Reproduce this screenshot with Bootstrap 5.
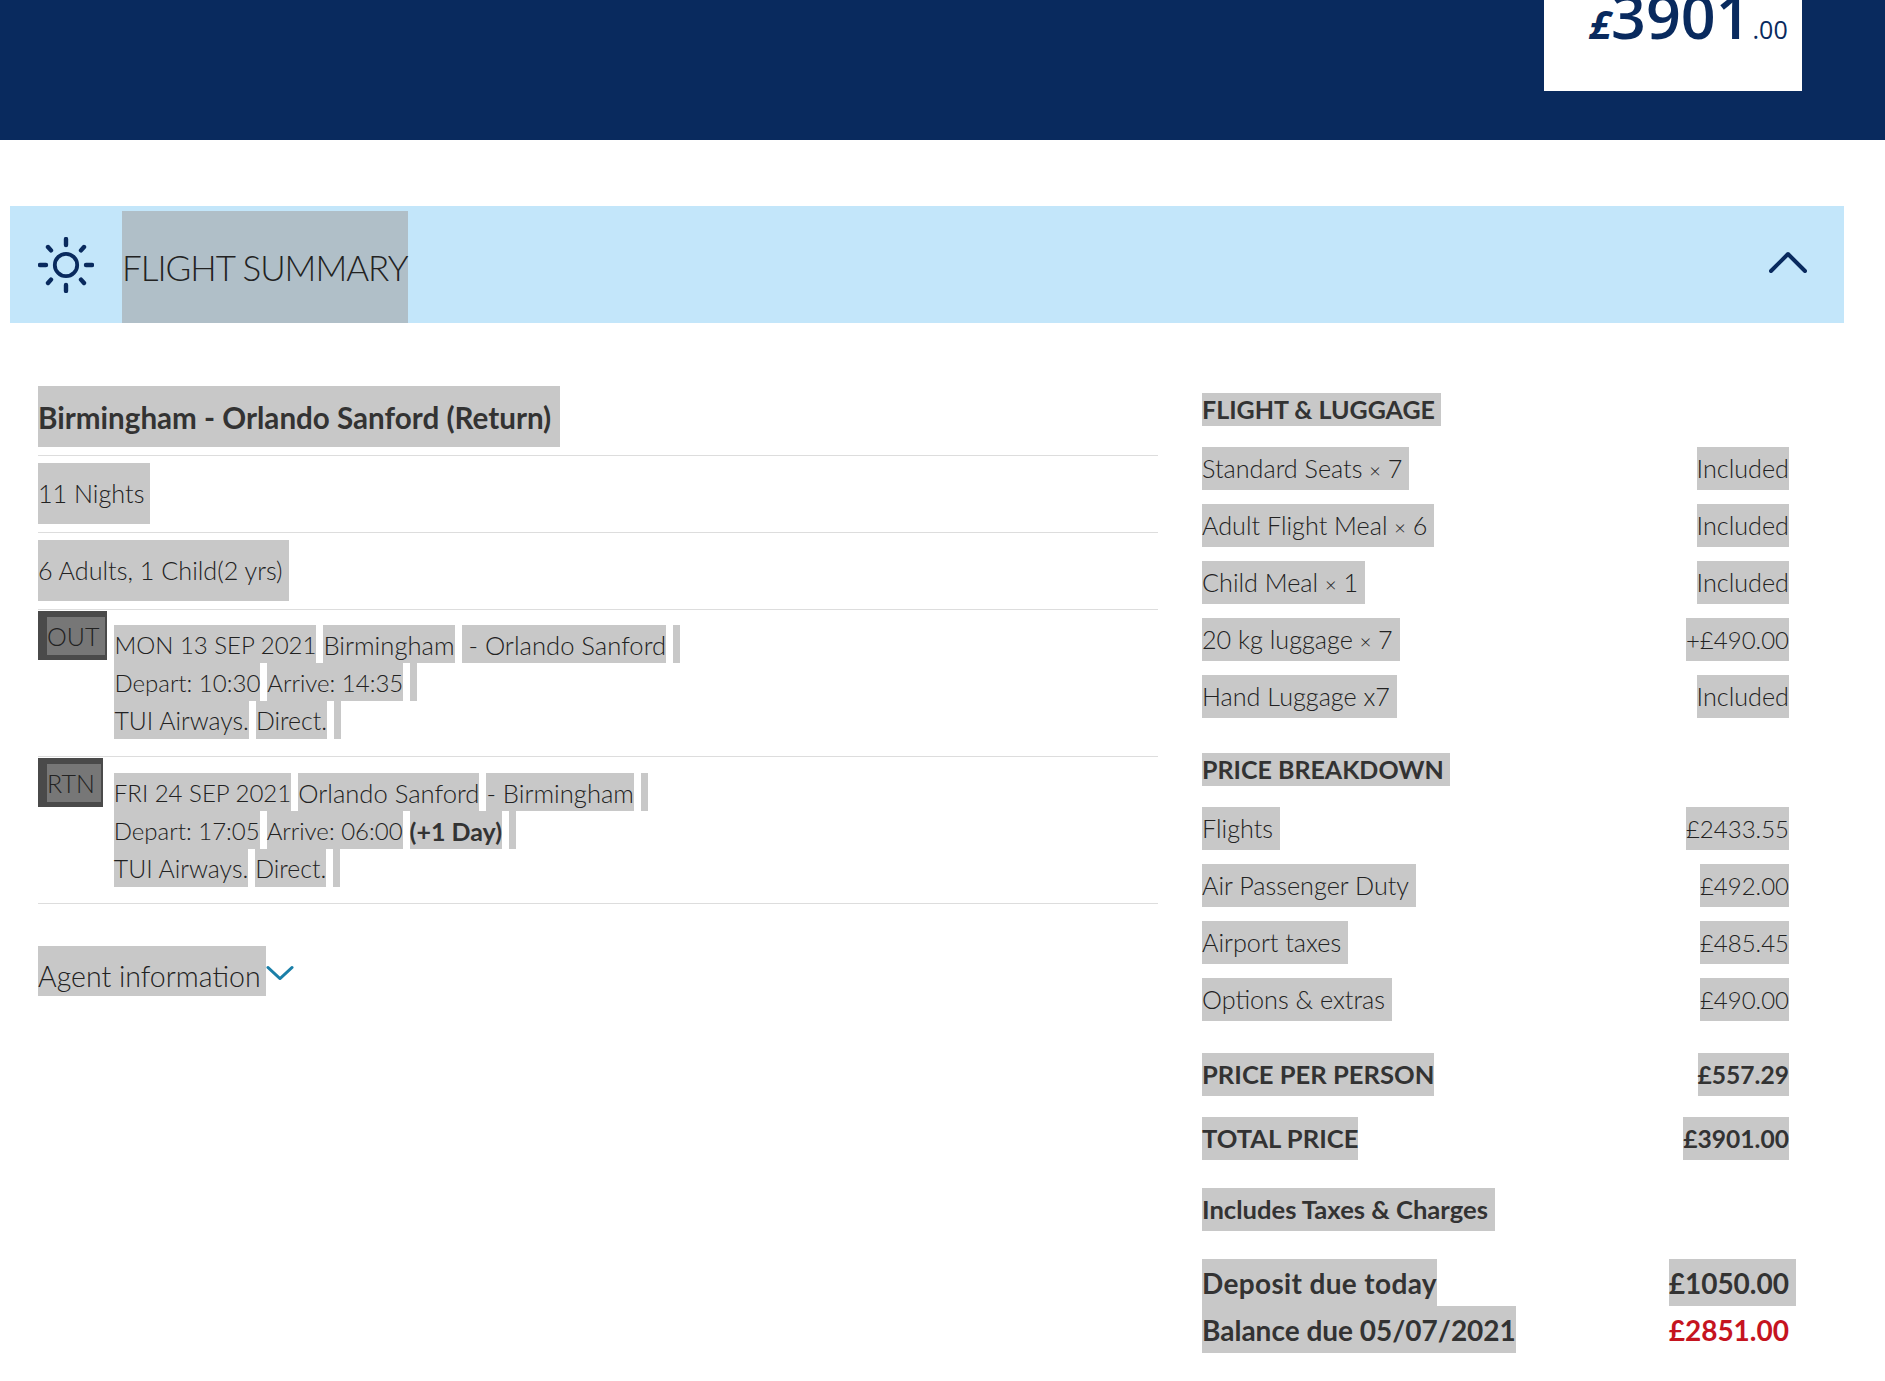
<!DOCTYPE html>
<html lang="en">
<head>
<meta charset="UTF-8">
<title>Flight Summary</title>
<link rel="stylesheet" href="https://cdn.jsdelivr.net/npm/bootstrap@5.3.0/dist/css/bootstrap.min.css">
<style>
body { font-family: Lato, "Open Sans", sans-serif; font-weight: 300; color: #222; background: #fff; font-size: 25.2px; }
.sel { display: inline-block; background: #c8c8c8; white-space: nowrap; }
.num { font-size: 24px; }
.mid { font-size: 24.8px; }
.times { font-size: 20px; line-height: 1; }

.top-bar { background: #092a5e; height: 140px; padding-left: 1544px; }
.price-box { background: #fff; width: 258px; height: 91px; overflow: hidden; color: #092a5e; font-family: "Open Sans", sans-serif; padding: 0 15px 45px 45px; line-height: 1; white-space: nowrap; }
.price-pound { font-size: 40px; font-weight: 700; font-style: italic; }
.price-main { font-size: 61px; font-weight: 600; }
.price-dec { font-size: 25px; font-weight: 400; margin-left: 2px; }

.summary-band { background: #c3e6fa; height: 117px; margin: 66px 41px 0 10px; padding: 0 37px 0 28px; }
.summary-title { background: #b0bfc8; font-size: 35px; letter-spacing: -1px; line-height: 112px; margin-left: 28px; padding-right: 1px; white-space: nowrap; }
.band-chevron { margin-bottom: 6px; }

.summary-body { padding: 63px 0 0 38px; gap: 44px; }
.trip-col { width: 1120px; }
.price-col { width: 594px; padding: 7px 7px 0 0; }

.trip-line { border-bottom: 1px solid #ddd; padding-bottom: 8px; margin-bottom: 7px; }
.trip-line .sel { height: 61px; line-height: 61px; padding-right: 6px; vertical-align: top; }
.trip-line .trip-title { font-size: 29.6px; font-weight: 700; color: #333; line-height: 63px; padding-right: 9px; }
.leg { border-bottom: 1px solid #ddd; padding-bottom: 17px; }
.leg-tag { background: #4a4a4a; height: 49px; padding: 6px 2px 0 9px; margin: 1px 7px 0 0; flex: none; font-size: 25px; }
.leg-tag span { display: block; background: #777; line-height: 38px; padding-right: 6px; }
.leg-lines { padding-top: 15px; }
.leg-back { padding-bottom: 16px; }
.leg-back .leg-tag { margin-right: 11px; }
.leg-back .leg-lines { padding-top: 16px; }
.leg-row { gap: 7px; height: 38px; font-size: 25.6px; }
.leg-row .sel { height: 38px; line-height: 40px; }
.blank { width: 7px; }
.strong-day { font-weight: 700; font-size: 25px; color: #333; }
.agent-row { margin-top: 42px; }
.agent-row .sel { font-size: 28.5px; height: 50px; line-height: 60px; padding-right: 5px; }
.agent-chevron { margin-top: 19px; }

.price-head { font-size: 25px; font-weight: 700; line-height: 33px; color: #333; }
.price-head .sel { padding-right: 6px; }
.price-line { margin-top: 14px; height: 43px; line-height: 43px; }
.price-line .sel { height: 43px; }
.price-line .sel:first-child { padding-right: 7px; }
.group-gap { margin-top: 35px; }
.list-gap { margin-top: 21px; }
.strong-line { font-size: 25.6px; font-weight: 700; line-height: 43px; color: #333; }
.charges-text { padding-right: 7px; }
.strong-num { font-size: 24.6px; }
.due-line { font-size: 28px; font-weight: 700; line-height: 47px; color: #333; }
.due-line > * { height: 47px; line-height: 49px; }
.due-first { letter-spacing: .35px; }
.due-amount { margin-right: -7px; padding-right: 7px; }
.due-red { color: #c5141f; }
</style>
</head>
<body>
<div class="top-bar">
  <div class="price-box d-flex align-items-end"><span><span class="price-pound">£</span><span class="price-main">3901</span><span class="price-dec">.00</span></span></div>
</div>

<div class="summary-band d-flex align-items-end">
  <svg class="align-self-center" width="56" height="56" viewBox="0 0 56 56" fill="none" stroke="#092a5e" stroke-width="4.4" stroke-linecap="round">
    <circle cx="28" cy="28" r="11.2" stroke-width="3.8"/>
    <path d="M28 2v6M28 48v6M2 28h6M48 28h6M10 10l3 3.4M46 10l-3 3.4M10 46l3-3.4M46 46l-3-3.4"/>
  </svg>
  <div class="summary-title">FLIGHT SUMMARY</div>
  <svg class="band-chevron ms-auto align-self-center" width="38" height="22" viewBox="0 0 38 22" fill="none" stroke="#092a5e" stroke-width="4" stroke-linecap="round" stroke-linejoin="round">
    <path d="M2 20L19 3l17 17"/>
  </svg>
</div>

<div class="summary-body d-flex align-items-start">
  <div class="trip-col">
    <div class="trip-line"><span class="sel trip-title">Birmingham - Orlando Sanford (Return)</span></div>
    <div class="trip-line"><span class="sel">11 Nights</span></div>
    <div class="trip-line mb-0"><span class="sel">6 Adults, 1 Child(2 yrs)</span></div>

    <div class="leg d-flex">
      <div class="leg-tag"><span>OUT</span></div>
      <div class="leg-lines">
        <div class="leg-row d-flex"><span class="sel num">MON 13 SEP 2021</span><span class="sel">Birmingham</span><span class="sel">&nbsp;- Orlando Sanford</span><span class="sel blank">&nbsp;</span></div>
        <div class="leg-row d-flex"><span class="sel num">Depart: 10:30</span><span class="sel num">Arrive: 14:35</span><span class="sel blank">&nbsp;</span></div>
        <div class="leg-row d-flex"><span class="sel mid">TUI Airways.</span><span class="sel mid">Direct.</span><span class="sel blank">&nbsp;</span></div>
      </div>
    </div>

    <div class="leg leg-back d-flex">
      <div class="leg-tag"><span>RTN</span></div>
      <div class="leg-lines">
        <div class="leg-row d-flex"><span class="sel num">FRI 24 SEP 2021</span><span class="sel">Orlando Sanford</span><span class="sel">- Birmingham</span><span class="sel blank">&nbsp;</span></div>
        <div class="leg-row d-flex"><span class="sel num">Depart: 17:05</span><span class="sel num">Arrive: 06:00</span><span class="sel strong-day">(+1 Day)</span><span class="sel blank">&nbsp;</span></div>
        <div class="leg-row d-flex"><span class="sel mid">TUI Airways.</span><span class="sel mid">Direct.</span><span class="sel blank">&nbsp;</span></div>
      </div>
    </div>

    <div class="agent-row d-flex align-items-start">
      <span class="sel">Agent information</span>
      <svg class="agent-chevron" width="28" height="16" viewBox="0 0 30 16" fill="none" stroke="#1a7fa8" stroke-width="3" stroke-linecap="round" stroke-linejoin="round">
        <path d="M2 2l13 12L28 2"/>
      </svg>
    </div>
  </div>

  <div class="price-col">
    <div class="price-head"><span class="sel">FLIGHT &amp; LUGGAGE</span></div>
    <div class="d-flex justify-content-between list-gap price-line"><span class="sel">Standard Seats <span class="times">×</span> 7</span><span class="sel">Included</span></div>
    <div class="d-flex justify-content-between price-line"><span class="sel">Adult Flight Meal <span class="times">×</span> 6</span><span class="sel">Included</span></div>
    <div class="d-flex justify-content-between price-line"><span class="sel">Child Meal <span class="times">×</span> 1</span><span class="sel">Included</span></div>
    <div class="d-flex justify-content-between price-line"><span class="sel">20 kg luggage <span class="times">×</span> 7</span><span class="sel num">+£490.00</span></div>
    <div class="d-flex justify-content-between price-line"><span class="sel">Hand Luggage x7</span><span class="sel">Included</span></div>

    <div class="price-head group-gap"><span class="sel">PRICE BREAKDOWN</span></div>
    <div class="d-flex justify-content-between list-gap price-line"><span class="sel">Flights</span><span class="sel num">£2433.55</span></div>
    <div class="d-flex justify-content-between price-line"><span class="sel">Air Passenger Duty</span><span class="sel num">£492.00</span></div>
    <div class="d-flex justify-content-between price-line"><span class="sel">Airport taxes</span><span class="sel num">£485.45</span></div>
    <div class="d-flex justify-content-between price-line"><span class="sel">Options &amp; extras</span><span class="sel num">£490.00</span></div>

    <div class="d-flex justify-content-between strong-line mt-4 pt-2"><span class="sel">PRICE PER PERSON</span><span class="sel strong-num">£557.29</span></div>
    <div class="d-flex justify-content-between strong-line list-gap"><span class="sel">TOTAL PRICE</span><span class="sel strong-num">£3901.00</span></div>
    <div class="strong-line mt-4 pt-1"><span class="sel charges-text">Includes Taxes &amp; Charges</span></div>
    <div class="d-flex justify-content-between due-line mt-4 pt-1"><span class="sel due-first">Deposit due today</span><span class="sel due-amount">£1050.00</span></div>
    <div class="d-flex justify-content-between due-line"><span class="sel">Balance due 05/07/2021</span><span class="due-red">£2851.00</span></div>
  </div>
</div>
</body>
</html>
